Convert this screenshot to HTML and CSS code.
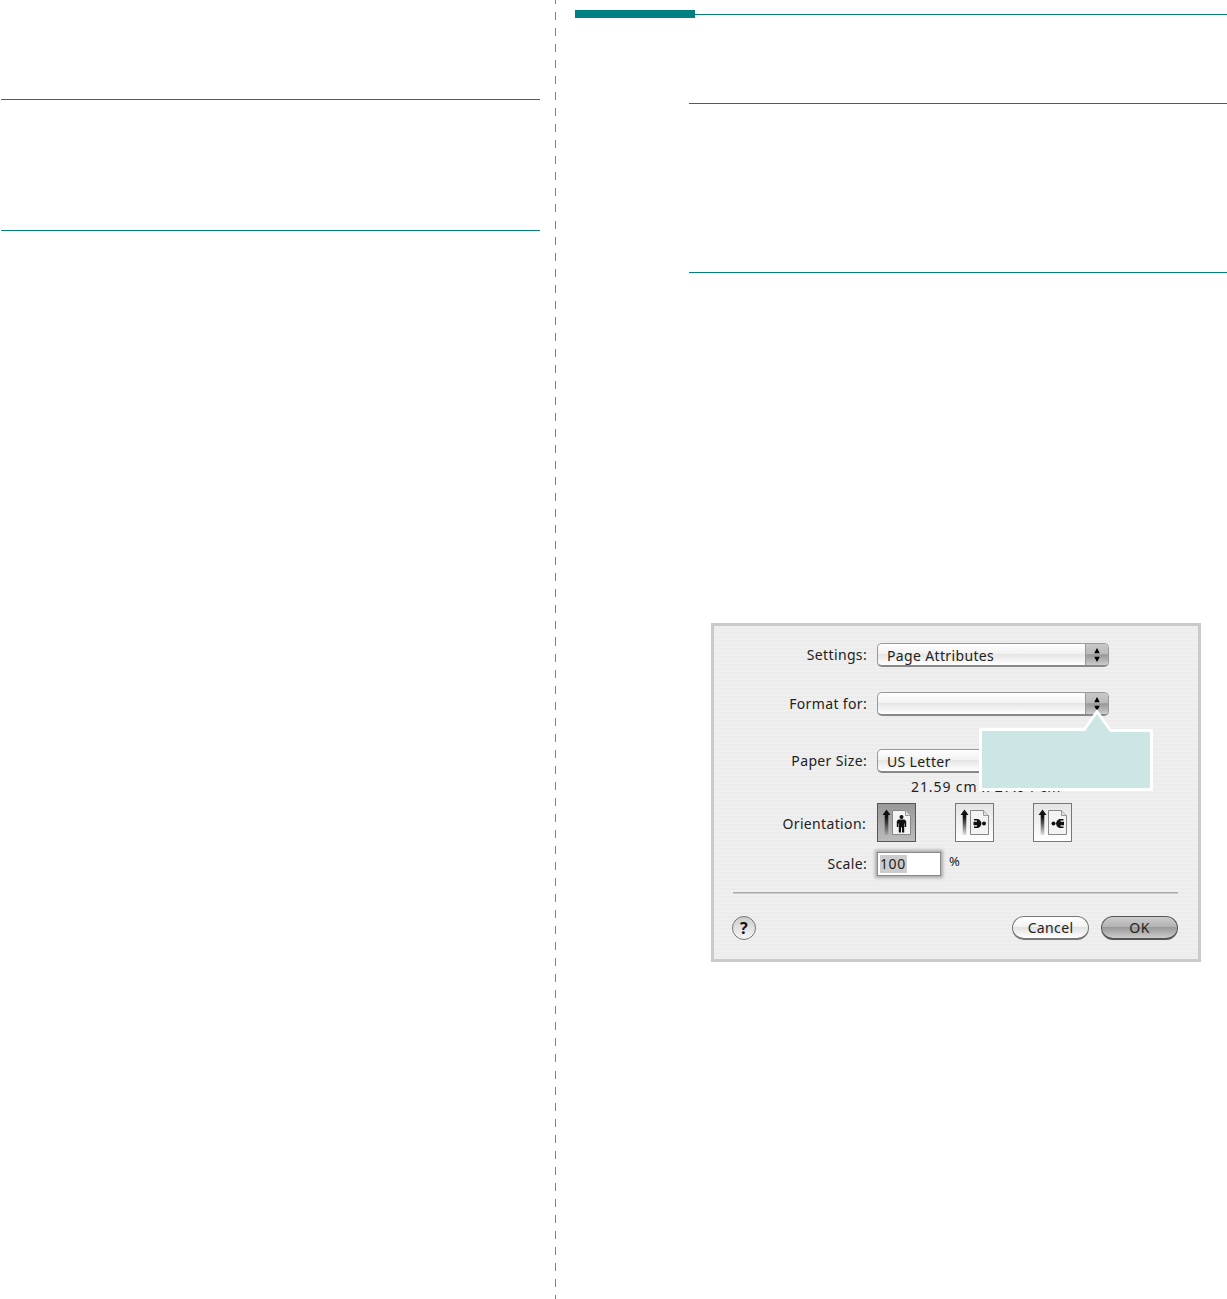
FILE: index.html
```
<!DOCTYPE html>
<html lang="en">
<head>
  <meta charset="UTF-8" />
  <title>Page Setup</title>
  <link rel="stylesheet" href="styles.css">
</head>
<body>
  <div class="page">
    <section class="column-left">
      <hr class="rule rule-top">
      <hr class="rule rule-bottom">
    </section>

    <div class="divider"></div>

    <section class="column-right">
      <div class="chapter-bar"><span class="chapter-tab"></span><span class="chapter-line"></span></div>
      <div class="column-body">
        <hr class="rule rule-first">
        <hr class="rule rule-second">

        <div class="dialog">
          <div class="row row-settings">
            <label>Settings:</label>
            <div class="select"><span class="value">Page Attributes</span><span class="arrows"><svg width="6" height="14" viewBox="0 0 6 14"><path d="M3 0L5.8 5.2H.2zM3 14L.2 8.8h5.6z"/></svg></span></div>
          </div>
          <div class="row row-format">
            <label>Format for:</label>
            <div class="select"><span class="value"></span><span class="arrows"><svg width="6" height="14" viewBox="0 0 6 14"><path d="M3 0L5.8 5.2H.2zM3 14L.2 8.8h5.6z"/></svg></span></div>
          </div>
          <div class="row row-paper">
            <label>Paper Size:</label>
            <div class="select"><span class="value">US Letter</span><span class="arrows"></span></div>
          </div>
          <div class="dimensions">21.59 cm x 27.94 cm</div>

          <div class="row row-orientation">
            <label>Orientation:</label>
            <div class="icons">
              <button class="orient selected">
                <svg width="37" height="37" viewBox="0 0 37 37">
                  <defs>
                    <linearGradient id="fade" x1="0" y1="0" x2="0" y2="1">
                      <stop offset="0.3" stop-color="#111"/>
                      <stop offset="1" stop-color="#111" stop-opacity="0.1"/>
                    </linearGradient>
                  </defs>
                  <path d="M8.500 5.500L12.500 11H10.300v20H6.700V11H4.500z" fill="url(#fade)"/>
                  <path d="M14.500 6.500h13l5 5v19h-18z" fill="#f3f3f3" stroke="#888"/>
                  <path d="M27.500 6.500v5h5" fill="#ddd" stroke="#999"/>
                  <circle cx="23.500" cy="13" r="2" fill="#111"/>
                  <path d="M20.500 15.600h6l1.700 1.400v6h-1.500v-3.600h-.5v9h-2.200v-5h-1v5h-2.200v-9h-.5v3.600h-1.500v-6z" fill="#111"/>
                </svg>
              </button>
              <button class="orient">
                <svg width="37" height="37" viewBox="0 0 37 37">
                  <path d="M8.500 5.500L12.500 11H10.300v20H6.700V11H4.500z" fill="url(#fade)"/>
                  <path d="M14.500 6.500h13l5 5v19h-18z" fill="#f3f3f3" stroke="#888"/>
                  <path d="M27.500 6.500v5h5" fill="#ddd" stroke="#999"/>
                  <circle cx="28" cy="19.500" r="2" fill="#111"/>
                  <path d="M18 15h4q3 1 3.500 4.500q-.5 3.500-3.500 4.500h-4v-1.600h3v-1.200h-3.500v-3.400H21v-1.200h-3z" fill="#111"/>
                </svg>
              </button>
              <button class="orient">
                <svg width="37" height="37" viewBox="0 0 37 37">
                  <path d="M8.500 5.500L12.500 11H10.300v20H6.700V11H4.500z" fill="url(#fade)"/>
                  <path d="M14.500 6.500h13l5 5v19h-18z" fill="#f3f3f3" stroke="#888"/>
                  <path d="M27.500 6.500v5h5" fill="#ddd" stroke="#999"/>
                  <circle cx="19.500" cy="19.500" r="2" fill="#111"/>
                  <path d="M29.500 15h-4q-3 1-3.500 4.500q.5 3.500 3.500 4.500h4v-1.600h-3v-1.200H30v-3.400h-3.500v-1.200h3z" fill="#111"/>
                </svg>
              </button>
            </div>
          </div>

          <div class="row row-scale">
            <label>Scale:</label>
            <div class="scale-box"><span class="selection">100</span></div>
            <span class="percent">%</span>
          </div>

          <div class="separator"></div>

          <div class="footer">
            <button class="help">?</button>
            <button class="btn">Cancel</button>
            <button class="btn btn-default">OK</button>
          </div>

          <!-- blank callout pointing at the Format for menu -->
          <svg class="callout" width="174" height="82" viewBox="0 0 174 82">
            <path d="M0 19h105L118 0l14 20h42v62H0z" fill="#fff"/>
            <path d="M3 22h103L118 5l13 18h40v56H3z" fill="#cce6e6"/>
          </svg>
        </div>
      </div>
    </section>
  </div>
</body>
</html>
```
FILE: styles.css
```
* { box-sizing: border-box; }
body { margin: 0; background: #fff; color: #222; font-family: "Lucida Grande", "Noto Sans", sans-serif; font-size: 14px; letter-spacing: 0.35px; }
button { font-family: inherit; letter-spacing: inherit; padding: 0; }

.page { display: flex; width: 1227px; height: 1299px; overflow: hidden; }

.column-left { width: 555px; padding-top: 99px; }

.rule { height: 1px; margin: 0; border: 0; background: #008080; }
.rule-top { width: 539px; margin-left: 1px; }
.rule-bottom { width: 539px; margin: 130px 0 0 1px; }

.divider {
  width: 1px;
  background: repeating-linear-gradient(to bottom, #808080 0, #808080 8px, transparent 8px, transparent 16.0375px);
  background-position: 0 -4px;
  background-size: 1px 1320px;
}

.column-right { flex: 1; padding: 10px 0 0 19px; }
.chapter-bar { display: flex; align-items: center; height: 8px; }
.chapter-tab { width: 120px; height: 8px; background: #008080; }
.chapter-line { flex: 1; height: 1px; margin-top: 1px; background: #008080; }

.column-body { padding-left: 114px; }
.rule-first { margin-top: 85px; }
.rule-second { margin-top: 168px; }

.dialog {
  position: relative;
  width: 490px;
  height: 339px;
  margin: 350px 0 0 22px;
  padding-top: 17px;
  border: 3px solid #cacaca;
  background: repeating-linear-gradient(to bottom, #efefef 0, #efefef 2px, #ececec 2px, #ececec 4px);
}

.row { display: flex; align-items: center; }
.row label { width: 153px; margin-right: 10px; padding-bottom: 2px; text-align: right; white-space: nowrap; }

.select {
  display: flex;
  width: 232px;
  height: 24px;
  border: 1px solid #999;
  border-bottom: 2px solid #888;
  border-radius: 5px;
  overflow: hidden;
  background: linear-gradient(#fff 0, #f2f2f2 45%, #e6e6e6 50%, #fff 100%);
}
.value { flex: 1; padding-left: 9px; line-height: 23px; }
.arrows {
  display: flex;
  align-items: center;
  justify-content: center;
  width: 23px;
  border-left: 1px solid #999;
  background: linear-gradient(#c8c8c8 0, #bbb 45%, #999 52%, #ccc 100%);
}

.row-settings { height: 24px; }
.row-format { height: 24px; margin-top: 25px; }
.row-paper { height: 24px; margin-top: 33px; }
.dimensions { height: 19px; margin: 5px 0 0 197px; line-height: 18px; letter-spacing: 0.9px; }

.row-orientation { height: 39px; margin-top: 6px; }
.row-orientation label { padding: 1px 1px 0 0; }
.row-scale label { padding-bottom: 0; }
.icons { display: flex; gap: 39px; }
.orient {
  width: 39px;
  height: 39px;
  border: 1px solid #777;
  background: linear-gradient(#e4e4e4, #fff);
}
.orient svg { display: block; }
.selected { border-color: #555; background: linear-gradient(#999, #bbb); }

.row-scale { height: 25px; margin-top: 9px; }
.scale-box {
  width: 64px;
  height: 24px;
  padding: 2px;
  border: 1px solid #888;
  background: #fff;
  box-shadow: 0 0 3px 2px #aaa;
}
.selection { display: block; width: 27px; height: 18px; background: #ccc; line-height: 18px; letter-spacing: 0.6px; }
.percent { margin: -5px 0 0 8px; font-size: 13px; }

.separator { height: 2px; margin: 16px 20px 0 19px; background: #aaa; border-bottom: 1px solid #ccc; }

.footer { display: flex; align-items: center; height: 24px; margin: 22px 20px 0 18px; }
.help {
  width: 24px;
  height: 24px;
  border: 1px solid #777;
  border-radius: 50%;
  background: linear-gradient(#ccc, #f6f6f6);
  color: #111;
  font-size: 16px;
  font-weight: bold;
  line-height: 20px;
}
.btn {
  width: 77px;
  height: 24px;
  border: 1px solid #777;
  border-bottom-width: 2px;
  border-radius: 12px;
  background: linear-gradient(#fff 0, #f4f4f4 45%, #e2e2e2 50%, #fff 100%);
  color: #222;
  font-size: 14px;
  line-height: 21px;
}
.help + .btn { margin-left: auto; }
.btn-default { margin-left: 12px; border-color: #555; background: linear-gradient(#ccc 0, #b4b4b4 45%, #999 50%, #ccc 100%); }

.callout { position: absolute; left: 265px; top: 83px; }
```
